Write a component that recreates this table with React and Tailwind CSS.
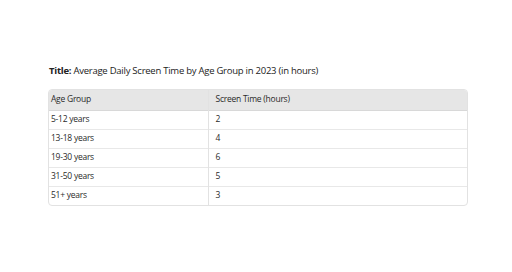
const rows = [
  ["5-12 years", "2"],
  ["13-18 years", "4"],
  ["19-30 years", "6"],
  ["31-50 years", "5"],
  ["51+ years", "3"],
];

export default function App() {
  return (
    <div
      className="w-[512px] h-[272px] bg-white text-[#333] pt-[64px] pl-[48px]"
      style={{ fontFamily: '"Open Sans", "Noto Sans", sans-serif' }}
    >
      <p className="text-[9.5px] tracking-[-0.25px] leading-[14px] text-[#222] ml-[1px]">
        <span className="font-bold">Title:</span> Average Daily Screen Time by Age Group in 2023 (in hours)
      </p>
      <div className="mt-[11px] w-[420px] border border-[#e2e2e2] rounded-[4px] overflow-hidden">
        <table className="w-full border-collapse text-[8.5px] tracking-[-0.25px] text-[#2a2a2a]">
          <thead>
            <tr className="bg-[#e6e6e6] h-[20px] border-b border-[#d8d8d8]">
              <th className="w-[159px] text-left font-normal px-[2px] border-r border-[#e2e2e2]">Age Group</th>
              <th className="text-left font-normal px-[7px]">Screen Time (hours)</th>
            </tr>
          </thead>
          <tbody>
            {rows.map(([age, hrs], i) => (
              <tr key={age} className={`h-[19px] ${i < rows.length - 1 ? "border-b border-[#e8e8e8]" : ""}`}>
                <td className="px-[2px] border-r border-[#e2e2e2]">{age}</td>
                <td className="px-[7px]">{hrs}</td>
              </tr>
            ))}
          </tbody>
        </table>
      </div>
    </div>
  );
}
